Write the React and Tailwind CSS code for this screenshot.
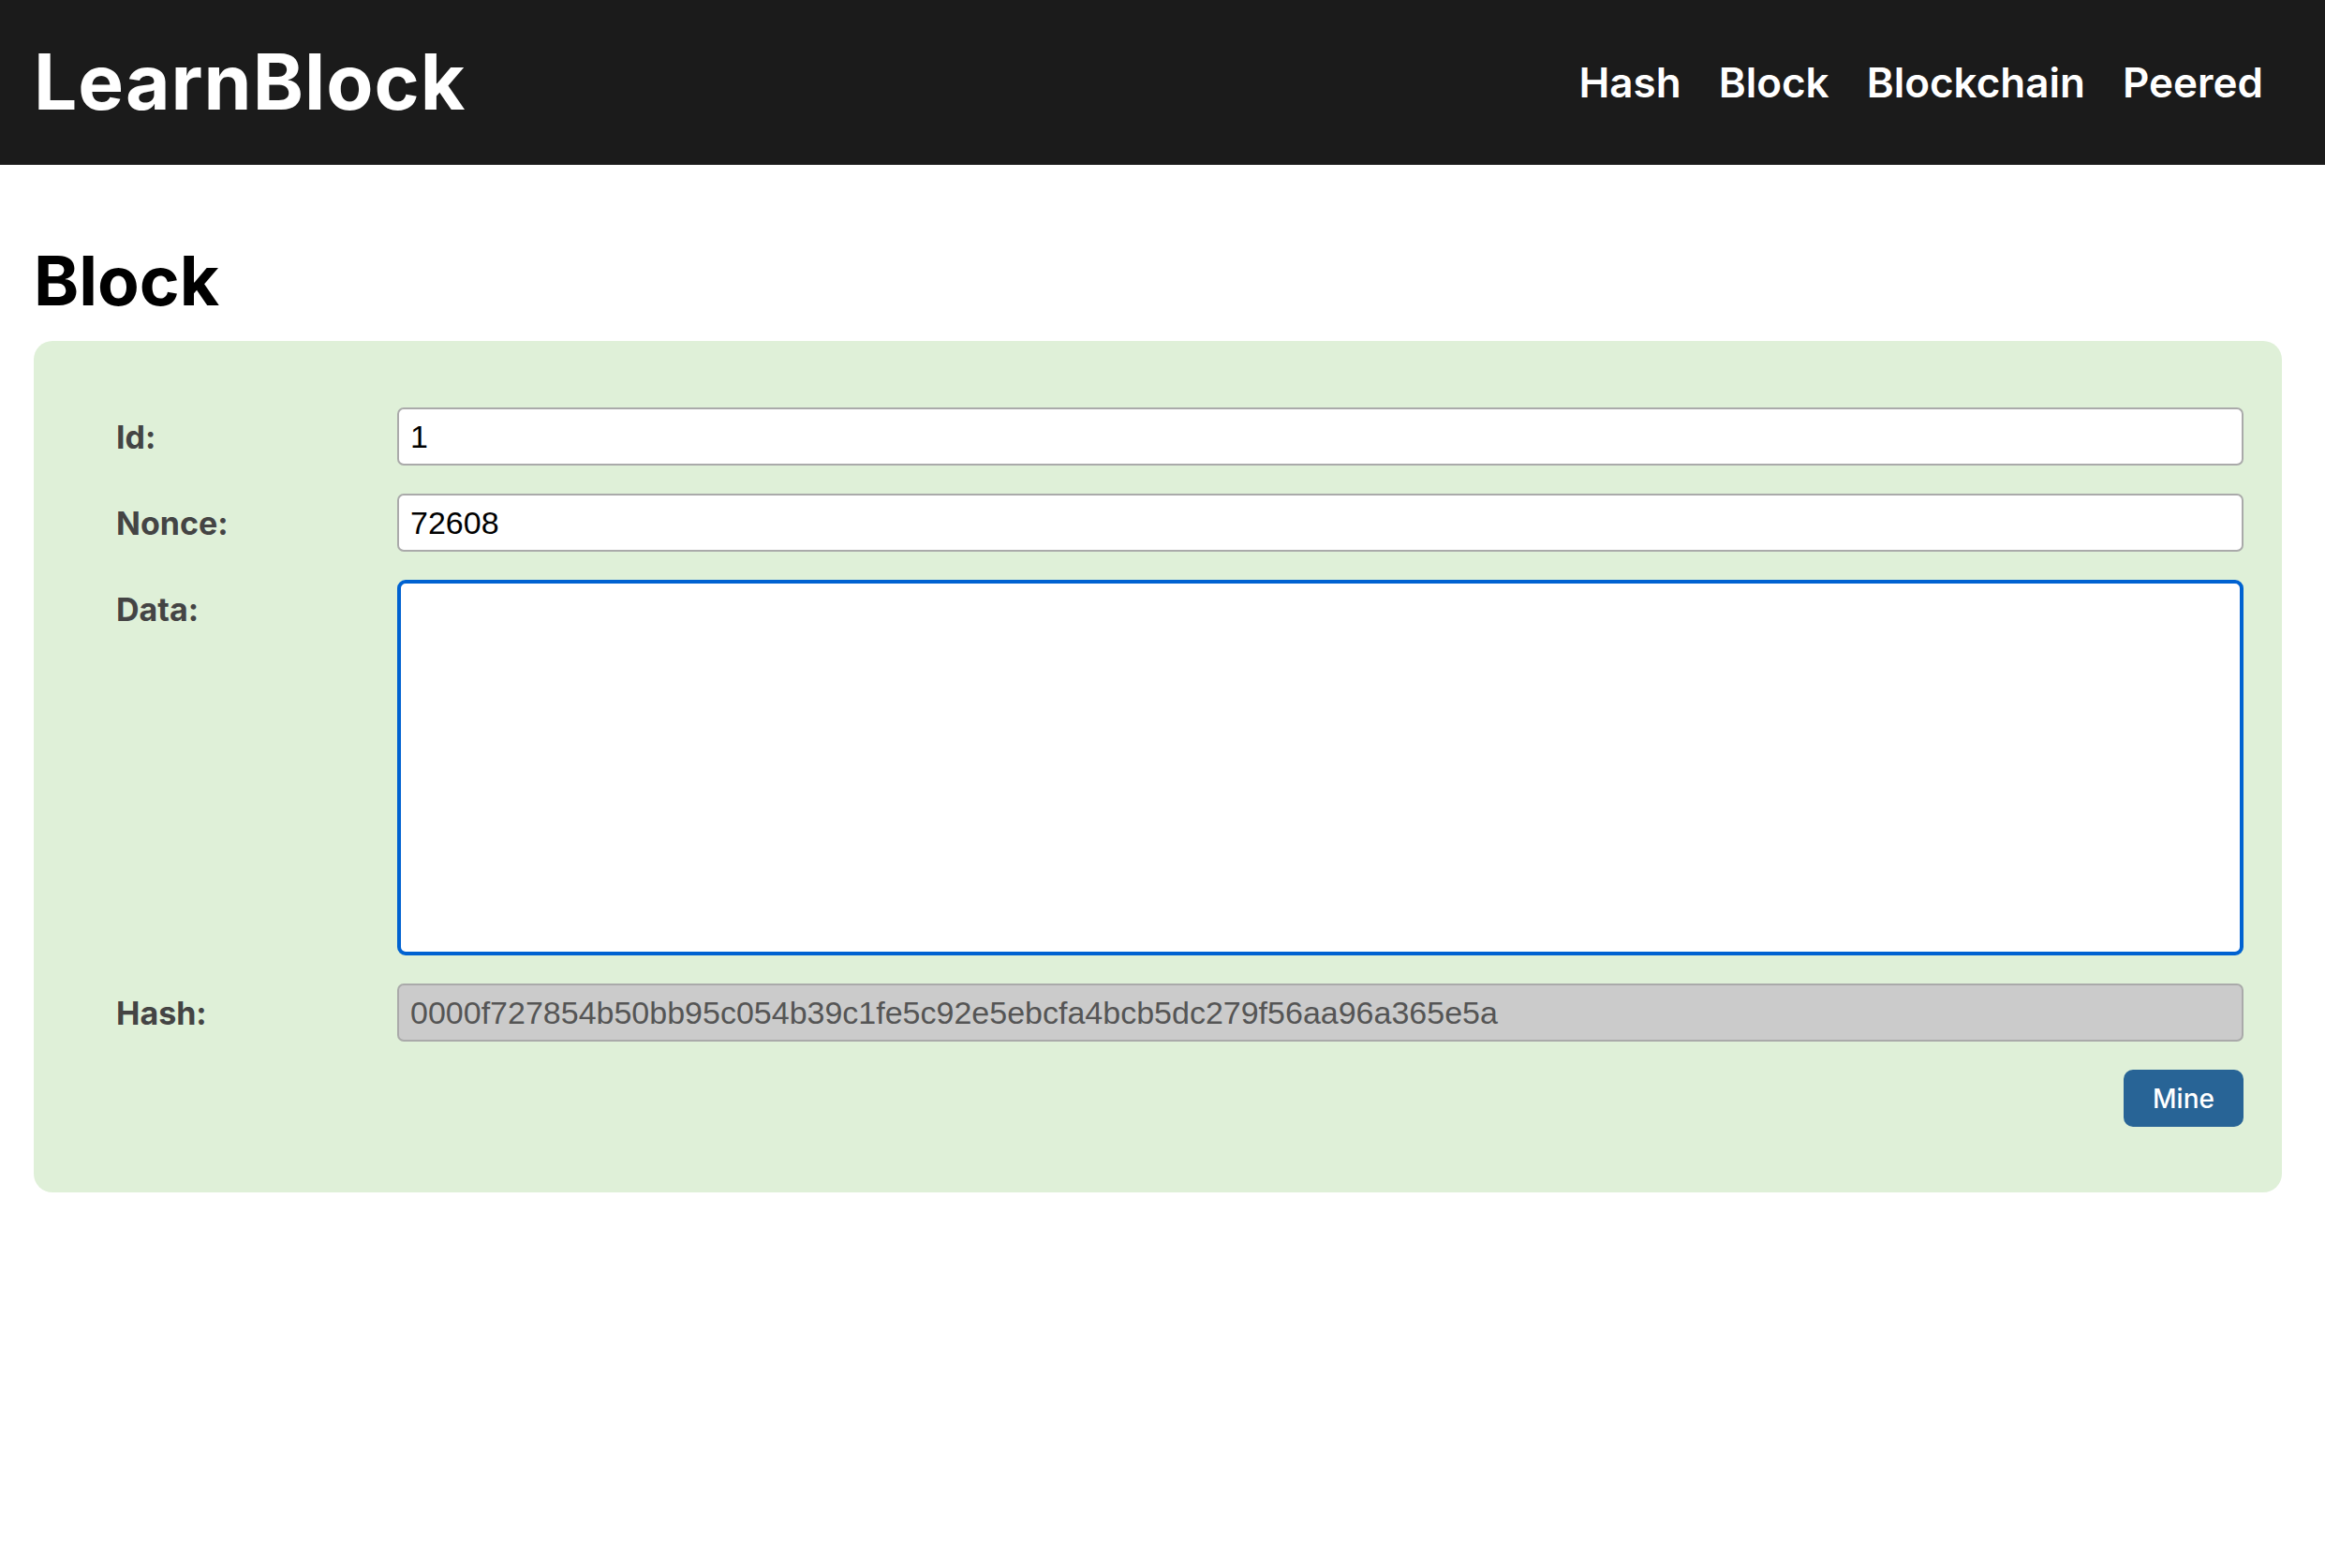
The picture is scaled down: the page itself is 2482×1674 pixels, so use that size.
import React from "react";

const inputFont = "font-['Liberation_Sans',Arial,sans-serif]";

export default function App() {
  return (
    <div className="min-h-[1674px] bg-white font-[Inter,sans-serif]">
      <header className="h-[176px] bg-[#1b1b1b] flex items-center justify-between pl-[36px] pr-[66px]">
        <div className="text-white text-[82px] font-bold leading-none tracking-[1px]">LearnBlock</div>
        <nav className="flex items-center gap-[40px] text-white text-[44px] font-semibold leading-none">
          <span>Hash</span>
          <span>Block</span>
          <span>Blockchain</span>
          <span>Peered</span>
        </nav>
      </header>
      <main className="pl-[36px] pr-[46px]">
        <h1 className="pt-[87px] mb-[28px] text-[73px] font-bold leading-none text-black">Block</h1>
        <div className="bg-[#dff0d8] rounded-[20px] pl-[88px] pr-[41px] pt-[71px] pb-[70px] flex flex-col gap-[30px]">
          <div className="flex">
            <label className="w-[300px] shrink-0 h-[62px] flex items-center text-[34px] font-bold text-[#444]">Id:</label>
            <input
              readOnly
              value="1"
              className="flex-1 h-[62px] bg-white border-2 border-[#aaa] rounded-[7px] px-[12px] text-[34px] text-black font-['Liberation_Sans',Arial,sans-serif] outline-none"
            />
          </div>
          <div className="flex">
            <label className="w-[300px] shrink-0 h-[62px] flex items-center text-[34px] font-bold text-[#444]">Nonce:</label>
            <input
              readOnly
              value="72608"
              className="flex-1 h-[62px] bg-white border-2 border-[#aaa] rounded-[7px] px-[12px] text-[34px] text-black font-['Liberation_Sans',Arial,sans-serif] outline-none"
            />
          </div>
          <div className="flex">
            <label className="w-[300px] shrink-0 h-[62px] flex items-center text-[34px] font-bold text-[#444]">Data:</label>
            <textarea
              readOnly
              className="flex-1 h-[401px] bg-white border-[4px] border-[#0062d1] rounded-[9px] px-[12px] text-[34px] text-black font-['Liberation_Sans',Arial,sans-serif] outline-none resize-none"
            />
          </div>
          <div className="flex">
            <label className="w-[300px] shrink-0 h-[62px] flex items-center text-[34px] font-bold text-[#444]">Hash:</label>
            <input
              readOnly
              value="0000f727854b50bb95c054b39c1fe5c92e5ebcfa4bcb5dc279f56aa96a365e5a"
              className="flex-1 h-[62px] bg-[#cbcbcb] border-2 border-[#aaa] rounded-[7px] px-[12px] text-[34px] text-[#555] font-['Liberation_Sans',Arial,sans-serif] outline-none"
            />
          </div>
          <div className="flex justify-end">
            <button className="w-[128px] h-[61px] rounded-[10px] bg-[#286496] text-white text-[28px] font-medium leading-none">
              Mine
            </button>
          </div>
        </div>
      </main>
    </div>
  );
}
